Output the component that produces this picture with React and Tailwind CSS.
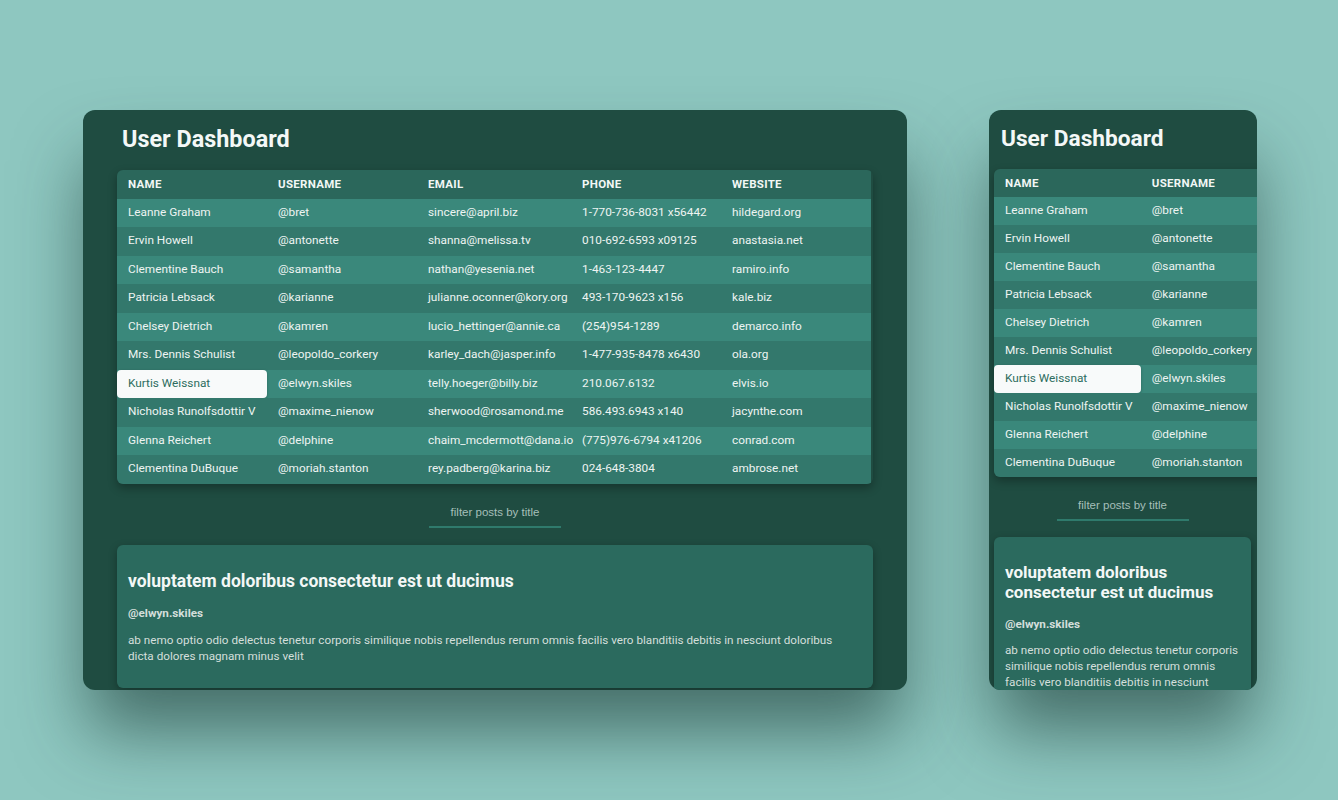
import React from "react";

const users = [
  ["Leanne Graham", "@bret", "sincere@april.biz", "1-770-736-8031 x56442", "hildegard.org"],
  ["Ervin Howell", "@antonette", "shanna@melissa.tv", "010-692-6593 x09125", "anastasia.net"],
  ["Clementine Bauch", "@samantha", "nathan@yesenia.net", "1-463-123-4447", "ramiro.info"],
  ["Patricia Lebsack", "@karianne", "julianne.oconner@kory.org", "493-170-9623 x156", "kale.biz"],
  ["Chelsey Dietrich", "@kamren", "lucio_hettinger@annie.ca", "(254)954-1289", "demarco.info"],
  ["Mrs. Dennis Schulist", "@leopoldo_corkery", "karley_dach@jasper.info", "1-477-935-8478 x6430", "ola.org"],
  ["Kurtis Weissnat", "@elwyn.skiles", "telly.hoeger@billy.biz", "210.067.6132", "elvis.io"],
  ["Nicholas Runolfsdottir V", "@maxime_nienow", "sherwood@rosamond.me", "586.493.6943 x140", "jacynthe.com"],
  ["Glenna Reichert", "@delphine", "chaim_mcdermott@dana.io", "(775)976-6794 x41206", "conrad.com"],
  ["Clementina DuBuque", "@moriah.stanton", "rey.padberg@karina.biz", "024-648-3804", "ambrose.net"],
];

const cols = ["Name", "Username", "Email", "Phone", "Website"];
const widths = ["w-[150px]", "w-[150px]", "w-[154px]", "w-[150px]", "w-[150px]"];

function UserTable({ mobile }) {
  const rowH = mobile ? "h-[28px]" : "h-[28.5px]";
  return (
    <div className={`rounded-md overflow-hidden shadow-[0_4px_10px_rgba(0,0,0,0.3)] ${mobile ? "w-[754px]" : "w-full"}`}>
      <table className="table-fixed border-collapse text-left w-[754px]">
        <thead>
          <tr className={`bg-[#2b675b] ${rowH}`}>
            {cols.map((c, i) => (
              <th
                key={c}
                className={`${i === 0 && mobile ? "w-[146px]" : widths[i]} px-[11px] pt-[1px] text-[11.5px] font-bold uppercase tracking-[0.3px] text-[#f2f7f5]`}
              >
                {c}
              </th>
            ))}
          </tr>
        </thead>
        <tbody>
          {users.map((u, r) => (
            <tr key={u[0]} className={`${r % 2 === 0 ? "bg-[#3a887b]" : "bg-[#33786c]"} ${rowH}`}>
              {u.map((v, i) =>
                r === 6 && i === 0 ? (
                  <td key={i} className="p-0">
                    <div className={`bg-[#f8fafa] rounded-[4px] ${rowH} flex items-center px-[11px] text-[11.8px] text-[#2d6d60] shadow-[0_1px_3px_rgba(0,0,0,0.25)]`}>
                      {v}
                    </div>
                  </td>
                ) : (
                  <td key={i} className="px-[11px] text-[11.8px] text-[#eef4f2] whitespace-nowrap">
                    {v}
                  </td>
                )
              )}
            </tr>
          ))}
        </tbody>
      </table>
    </div>
  );
}

function Dashboard({ mobile }) {
  return (
    <div
      className={`${mobile ? "w-[268px] pl-[5px] pr-[6px]" : "w-[824px] px-[34px]"} h-[580px] shrink-0 overflow-hidden rounded-xl bg-[#1f4c41] pt-[13px] shadow-[0_45px_70px_-5px_rgba(20,50,45,0.6)]`}
    >
      <h1 className={`${mobile ? "text-[22.7px] pl-[7px]" : "text-[23.4px] pl-[5px]"} leading-[32px] font-bold text-[#f4f8f7]`}>
        User Dashboard
      </h1>
      <div className={mobile ? "mt-[14px]" : "mt-[15px]"}>
        <UserTable mobile={mobile} />
      </div>
      <div className="flex justify-center mt-[18px]">
        <input
          placeholder="filter posts by title"
          className="w-[132px] bg-transparent border-b-2 border-[#2f7a6c] text-center text-[11.5px] pb-[5px] pt-[2px] outline-none text-[#cfe0dc] placeholder:text-[#a6bfb9] font-['Liberation_Sans',Arial,sans-serif]"
        />
      </div>
      <div
        className={`${mobile ? "mt-[16px] pt-[25px]" : "mt-[17px] pt-[25px] pr-[30px]"} rounded-md bg-[#2b6a5e] pl-[11px] pb-[24px] shadow-[0_3px_8px_rgba(0,0,0,0.3)]`}
      >
        <h2 className={`${mobile ? "leading-[20px] text-[17px] pr-[11px]" : "leading-[22px] text-[17.5px]"} font-bold text-[#f3f7f6]`}>
          voluptatem doloribus consectetur est ut ducimus
        </h2>
        <p className={`${mobile ? "mt-[14px]" : "mt-[13px]"} text-[11.7px] font-bold text-[#d3dedb]`}>@elwyn.skiles</p>
        <p className={`${mobile ? "mt-[8px] pr-[11px]" : "mt-[10px]"} text-[11.7px] leading-[16px] text-[#d4dfdb]`}>
          ab nemo optio odio delectus tenetur corporis similique nobis repellendus rerum omnis facilis vero blanditiis
          debitis in nesciunt doloribus dicta dolores magnam minus velit
        </p>
      </div>
    </div>
  );
}

export default function App() {
  return (
    <div className="min-h-[800px] h-[800px] overflow-hidden bg-[#8ec7c0] font-['Roboto',sans-serif] flex justify-center items-start gap-[82px] pt-[110px] pl-[2px]">
      <Dashboard />
      <Dashboard mobile />
    </div>
  );
}
